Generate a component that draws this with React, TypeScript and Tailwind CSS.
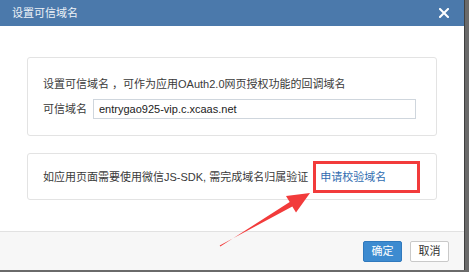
import React from 'react';

const font = { fontFamily: '"Liberation Sans", "Noto Sans CJK SC", sans-serif' };

export default function App() {
    return (
        <div className="relative w-[469px] h-[272px] overflow-hidden bg-[#6a6a6a]" style={font}>
            <div className="w-[465px] h-[270px] flex flex-col bg-white border-r border-[#3f3f3f]">
                <div className="h-[26px] bg-[#4b79ab] flex items-center justify-between pl-3 pr-[15px] shrink-0">
                    <span className="text-[11px] leading-none text-[#eef3f8]">设置可信域名</span>
                    <svg width="10" height="10" viewBox="0 0 10 10">
                        <path d="M1 1L9 9M9 1L1 9" stroke="white" strokeWidth="2" strokeLinecap="square" />
                    </svg>
                </div>
                <div className="flex-1 px-[27px] pt-[31px] flex flex-col gap-[17px]">
                    <div className="border border-[#e3e3e3] rounded-[3px] px-[15px] pt-[19px] pb-[16px] text-[11px] leading-[14px] text-[#3a3a3a]">
                        <p>设置可信域名 ，可作为应用OAuth2.0网页授权功能的回调域名</p>
                        <div className="flex items-center mt-[8px]">
                            <span className="w-[50px] shrink-0">可信域名</span>
                            <div className="w-[323px] h-[20px] border border-[#cfd6dd] flex items-center pl-[5px]">
                                <span className="text-[11px] text-[#222]">entrygao925-vip.c.xcaas.net</span>
                            </div>
                        </div>
                    </div>
                    <div className="border border-[#e3e3e3] rounded-[3px] h-[47px] pl-[15px] flex items-center text-[11px] leading-[14px] text-[#3a3a3a]">
                        <span>如应用页面需要使用微信JS-SDK, 需完成域名归属验证</span>
                        <span className="ml-[5px] h-[32px] border-[3px] border-[#f23b3b] pl-[4px] pr-[31px] flex items-center text-[#2f6cb0]">申请校验域名</span>
                    </div>
                </div>
                <div className="h-[39px] shrink-0 bg-[#f7f7f7] border-t border-[#e2e2e2] flex items-center justify-end gap-2 pr-[15px]">
                    <button className="w-[39px] h-[21px] rounded-[2px] bg-[#3d8bd0] border border-[#3079bd] text-white text-[11px] leading-none">确定</button>
                    <button className="w-[39px] h-[21px] rounded-[2px] bg-white border border-[#c9c9c9] text-[#333] text-[11px] leading-none">取消</button>
                </div>
            </div>
            <svg className="absolute left-0 top-0 pointer-events-none" width="469" height="272" viewBox="0 0 469 272">
                <polygon
                    points="219.7,245.6 292.3,206.4 296,212.5 310,193 286,196 289.7,202 220.3,246.4"
                    fill="#f23b3b"
                />
            </svg>
        </div>
    );
}
